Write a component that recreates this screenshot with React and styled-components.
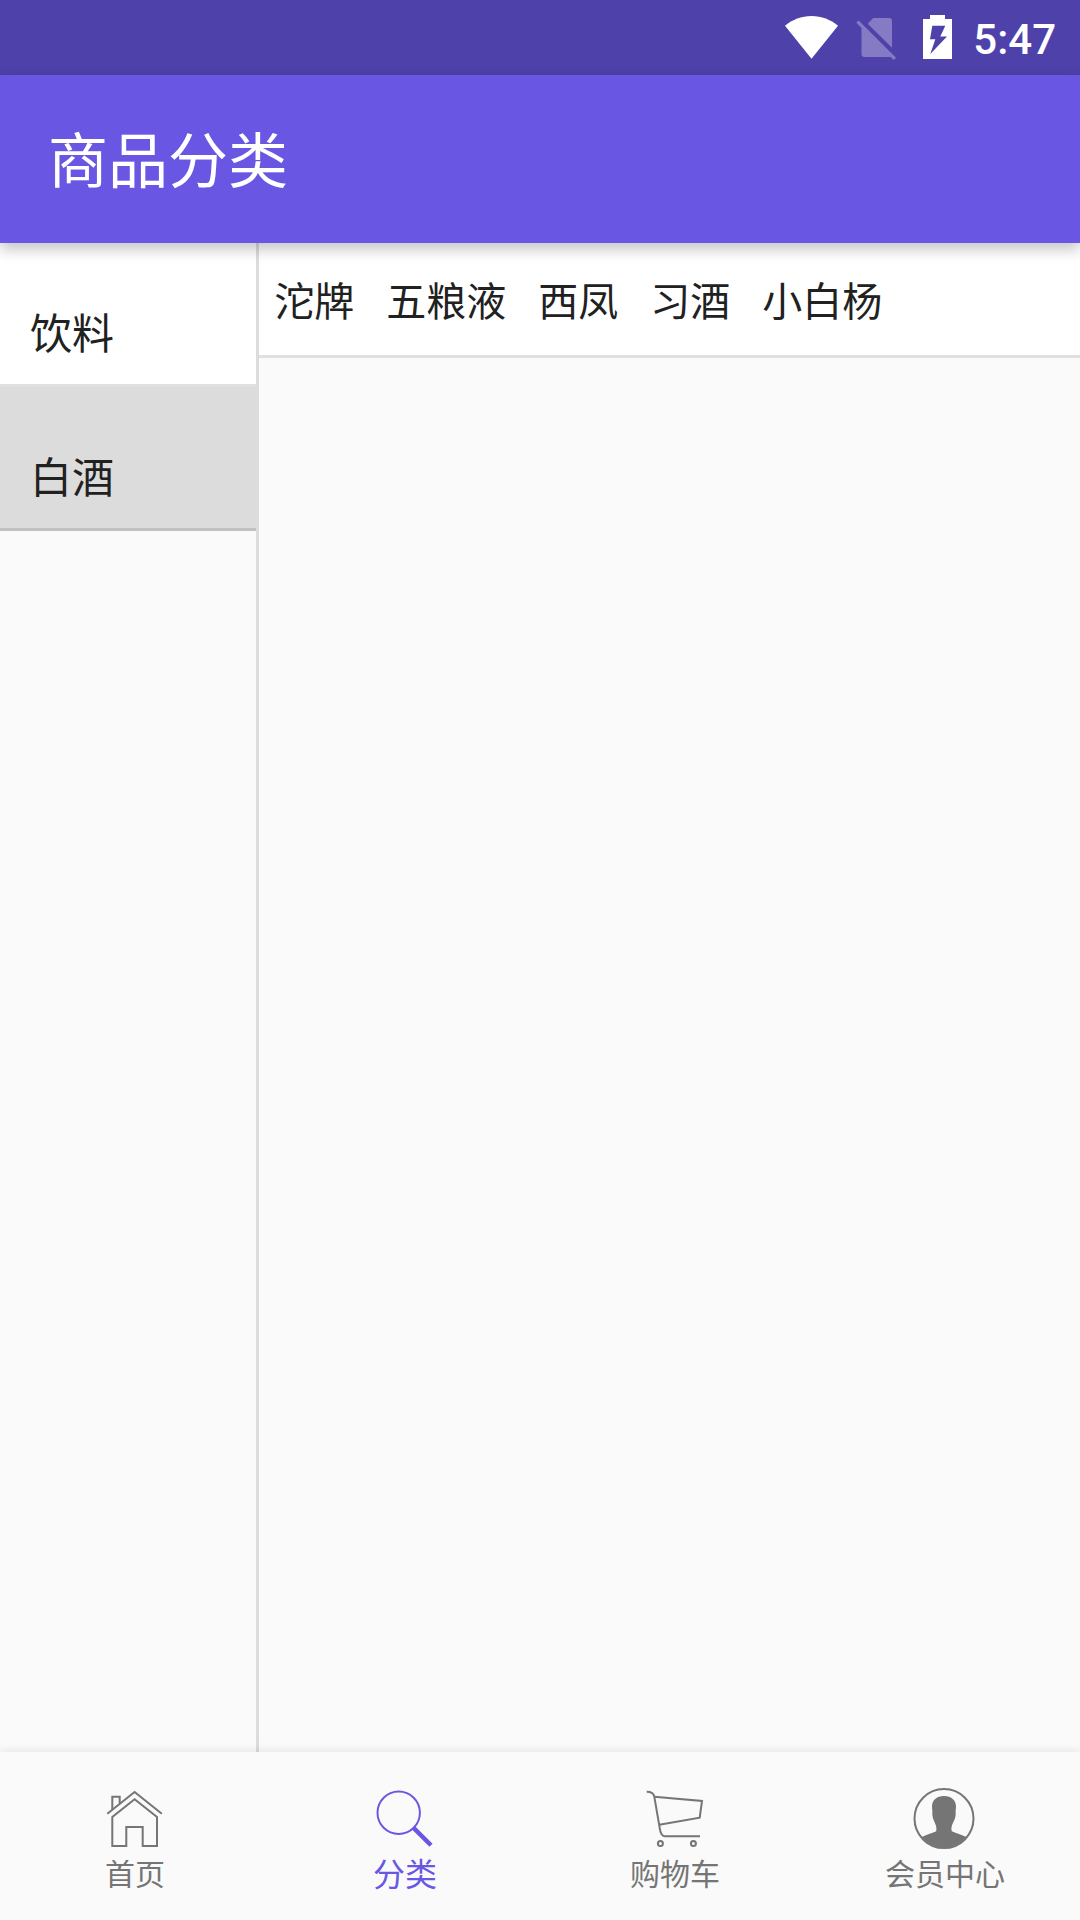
import React, { useState } from "react";
import styled, { createGlobalStyle } from "styled-components";

const color = {
  primary: "#6957e3",
  primaryDark: "#4e41a9",
  page: "#fafafa",
  line: "#dcdcdc",
  text: "#212121",
  muted: "#757575",
};

const GlobalStyle = createGlobalStyle`
  *, *::before, *::after { box-sizing: border-box; }
  body {
    margin: 0;
    background: ${color.page};
    color: ${color.text};
    font-family: Roboto, "Noto Sans CJK SC", sans-serif;
  }
  button {
    margin: 0;
    border: 0;
    font: inherit;
    color: inherit;
    cursor: pointer;
  }
`;

const Screen = styled.div`
  display: flex;
  flex-direction: column;
  min-height: 100vh;
`;

const StatusBar = styled.div`
  display: flex;
  align-items: center;
  justify-content: flex-end;
  gap: 12px;
  height: 75px;
  padding-right: 24px;
  background: ${color.primaryDark};
  color: #fff;
`;

const StatusIcon = styled.svg`
  display: block;
  flex: none;
  height: 49px;
`;

const Clock = styled.time`
  padding-top: 4px;
  font-size: 42px;
  line-height: 48px;
  font-weight: 500;
`;

const AppBar = styled.header`
  position: relative;
  z-index: 1;
  display: flex;
  align-items: center;
  height: 168px;
  padding: 8px 48px 0;
  background: ${color.primary};
  color: #fff;
  box-shadow: 0 6px 14px rgba(0, 0, 0, 0.24);
`;

const Title = styled.h1`
  margin: 0;
  font-size: 60px;
  line-height: 72px;
  font-weight: 400;
`;

const Content = styled.main`
  flex: 1;
  display: flex;
`;

const Sidebar = styled.nav`
  flex: none;
  width: 24%;
  min-width: 200px;
  border-right: 3px solid ${color.line};
`;

const Category = styled.button`
  display: block;
  width: 100%;
  padding: 62px 30px 19px;
  border-bottom: 3px solid ${(p) => (p.$selected ? "#c1c1c1" : "#e0e0e0")};
  background: ${(p) => (p.$selected ? color.line : "#fff")};
  font-size: 42px;
  line-height: 60px;
  text-align: left;
`;

const Panel = styled.section`
  flex: 1;
  min-width: 0;
`;

const BrandRow = styled.div`
  display: flex;
  flex-wrap: wrap;
  gap: 32px;
  padding: 30px 15px 22px;
  border-bottom: 3px solid #e0e0e0;
  background: #fff;
`;

const Brand = styled.button`
  padding: 0;
  background: none;
  font-size: 40px;
  line-height: 60px;
`;

const TabBar = styled.nav`
  display: flex;
  background: ${color.page};
  box-shadow: 0 -2px 8px rgba(0, 0, 0, 0.08);
`;

const Tab = styled.button`
  flex: 1;
  display: flex;
  flex-direction: column;
  align-items: center;
  gap: 2px;
  padding: 35px 0 23px;
  background: none;
  color: ${(p) => (p.$active ? color.primary : color.muted)};
`;

const TabIcon = styled.svg`
  display: block;
  width: 64px;
  height: 64px;
  fill: none;
  stroke: currentColor;
  stroke-width: 2;
`;

const TabLabel = styled.span`
  font-size: ${(p) => (p.$active ? 32 : 30)}px;
  line-height: 44px;
`;

const HomeIcon = () => (
  <TabIcon viewBox="0 0 64 64" aria-hidden="true">
    <path d="M4.3 26.7 31.6 5l27.2 21.7" />
    <path d="M9.3 22.7V9.8h7.4v6.4" />
    <path d="M9.3 59V30l22.3-17.7L54 30v29H39.7V40H23.3v19z" />
  </TabIcon>
);

const SearchIcon = () => (
  <TabIcon viewBox="0 0 64 64" aria-hidden="true">
    <circle cx="25.7" cy="25.7" r="21.2" />
    <path d="M40.3 40.6 58 58.3" strokeWidth="4.4" />
  </TabIcon>
);

const CartIcon = () => (
  <TabIcon viewBox="0 0 64 64" aria-hidden="true">
    <path d="M3.7 4.7C8 4.7 10.6 5.6 11.3 9.7L17 42.7C17.8 47.2 18.8 49.3 22 49.3H57" />
    <path d="M11.3 9.7 59 14l-2.3 16.7-40.4 7" />
    <circle cx="17.4" cy="56.4" r="2.5" />
    <circle cx="50.4" cy="56.4" r="2.5" />
  </TabIcon>
);

const MemberIcon = () => (
  <TabIcon viewBox="0 0 64 64" aria-hidden="true">
    <circle cx="31" cy="31.6" r="29.5" />
    <path
      d="M31 9c-7.600 0-12 4.200-12 10.500 0 2.500.6 4 .3 7.500.3 5.500 2.700 8 3.700 12 .5 2 .5 3.500.2 5.200C18.500 46.300 13.500 47.500 8.500 50a29.500 29.500 0 0 0 45 0C48.500 47.500 43.500 46.300 38.800 44.200c-.6-1.700-.4-3.200 0-5.200 1.200-4 3.600-6.500 3.900-12-.3-3.500.3-5 .3-7.500C43 13.200 38.600 9 31 9z"
      fill="currentColor"
      stroke="none"
    />
  </TabIcon>
);

const WifiIcon = () => (
  <StatusIcon width="54" viewBox="0 0 54 49" aria-hidden="true">
    <path d="M0 12.700C7.500 6.500 16.500 3 26.500 3S45.500 6.500 53 12.700L26.500 45.700z" fill="#fff" />
  </StatusIcon>
);

const NoSimIcon = () => (
  <StatusIcon width="51" viewBox="0 0 51 49" aria-hidden="true" fill="#857bc5">
    <path d="M16.700 10.700 22.300 5H38a3 3 0 0 1 3 3v26.700z" />
    <path d="M5.300 9.700 7.600 7.400 45 44.800 42.700 47.100 39.400 43.800 38 44H13.500a3 3 0 0 1-3-3V15z" />
  </StatusIcon>
);

const BatteryIcon = () => (
  <StatusIcon width="47" viewBox="0 0 47 49" aria-hidden="true">
    <path d="M9 6h7V2h15v4h7v40H9z" fill="#fff" />
    <path d="M18.300 12.700h13L26.300 23.500H33L16.300 41l5-14.700H16z" fill={color.primaryDark} />
  </StatusIcon>
);

const categories = ["饮料", "白酒"];
const brands = {
  饮料: [],
  白酒: ["沱牌", "五粮液", "西凤", "习酒", "小白杨"],
};
const tabs = [
  { label: "首页", Icon: HomeIcon },
  { label: "分类", Icon: SearchIcon },
  { label: "购物车", Icon: CartIcon },
  { label: "会员中心", Icon: MemberIcon },
];

export default function App() {
  const [category, setCategory] = useState("白酒");
  const [tab, setTab] = useState("分类");

  return (
    <Screen>
      <GlobalStyle />
      <StatusBar>
        <WifiIcon />
        <NoSimIcon />
        <BatteryIcon />
        <Clock>5:47</Clock>
      </StatusBar>
      <AppBar>
        <Title>商品分类</Title>
      </AppBar>
      <Content>
        <Sidebar>
          {categories.map((name) => (
            <Category
              key={name}
              type="button"
              $selected={name === category}
              onClick={() => setCategory(name)}
            >
              {name}
            </Category>
          ))}
        </Sidebar>
        <Panel>
          <BrandRow>
            {brands[category].map((name) => (
              <Brand key={name} type="button">
                {name}
              </Brand>
            ))}
          </BrandRow>
        </Panel>
      </Content>
      <TabBar>
        {tabs.map(({ label, Icon }) => (
          <Tab
            key={label}
            type="button"
            $active={label === tab}
            onClick={() => setTab(label)}
          >
            <Icon />
            <TabLabel $active={label === tab}>{label}</TabLabel>
          </Tab>
        ))}
      </TabBar>
    </Screen>
  );
}
